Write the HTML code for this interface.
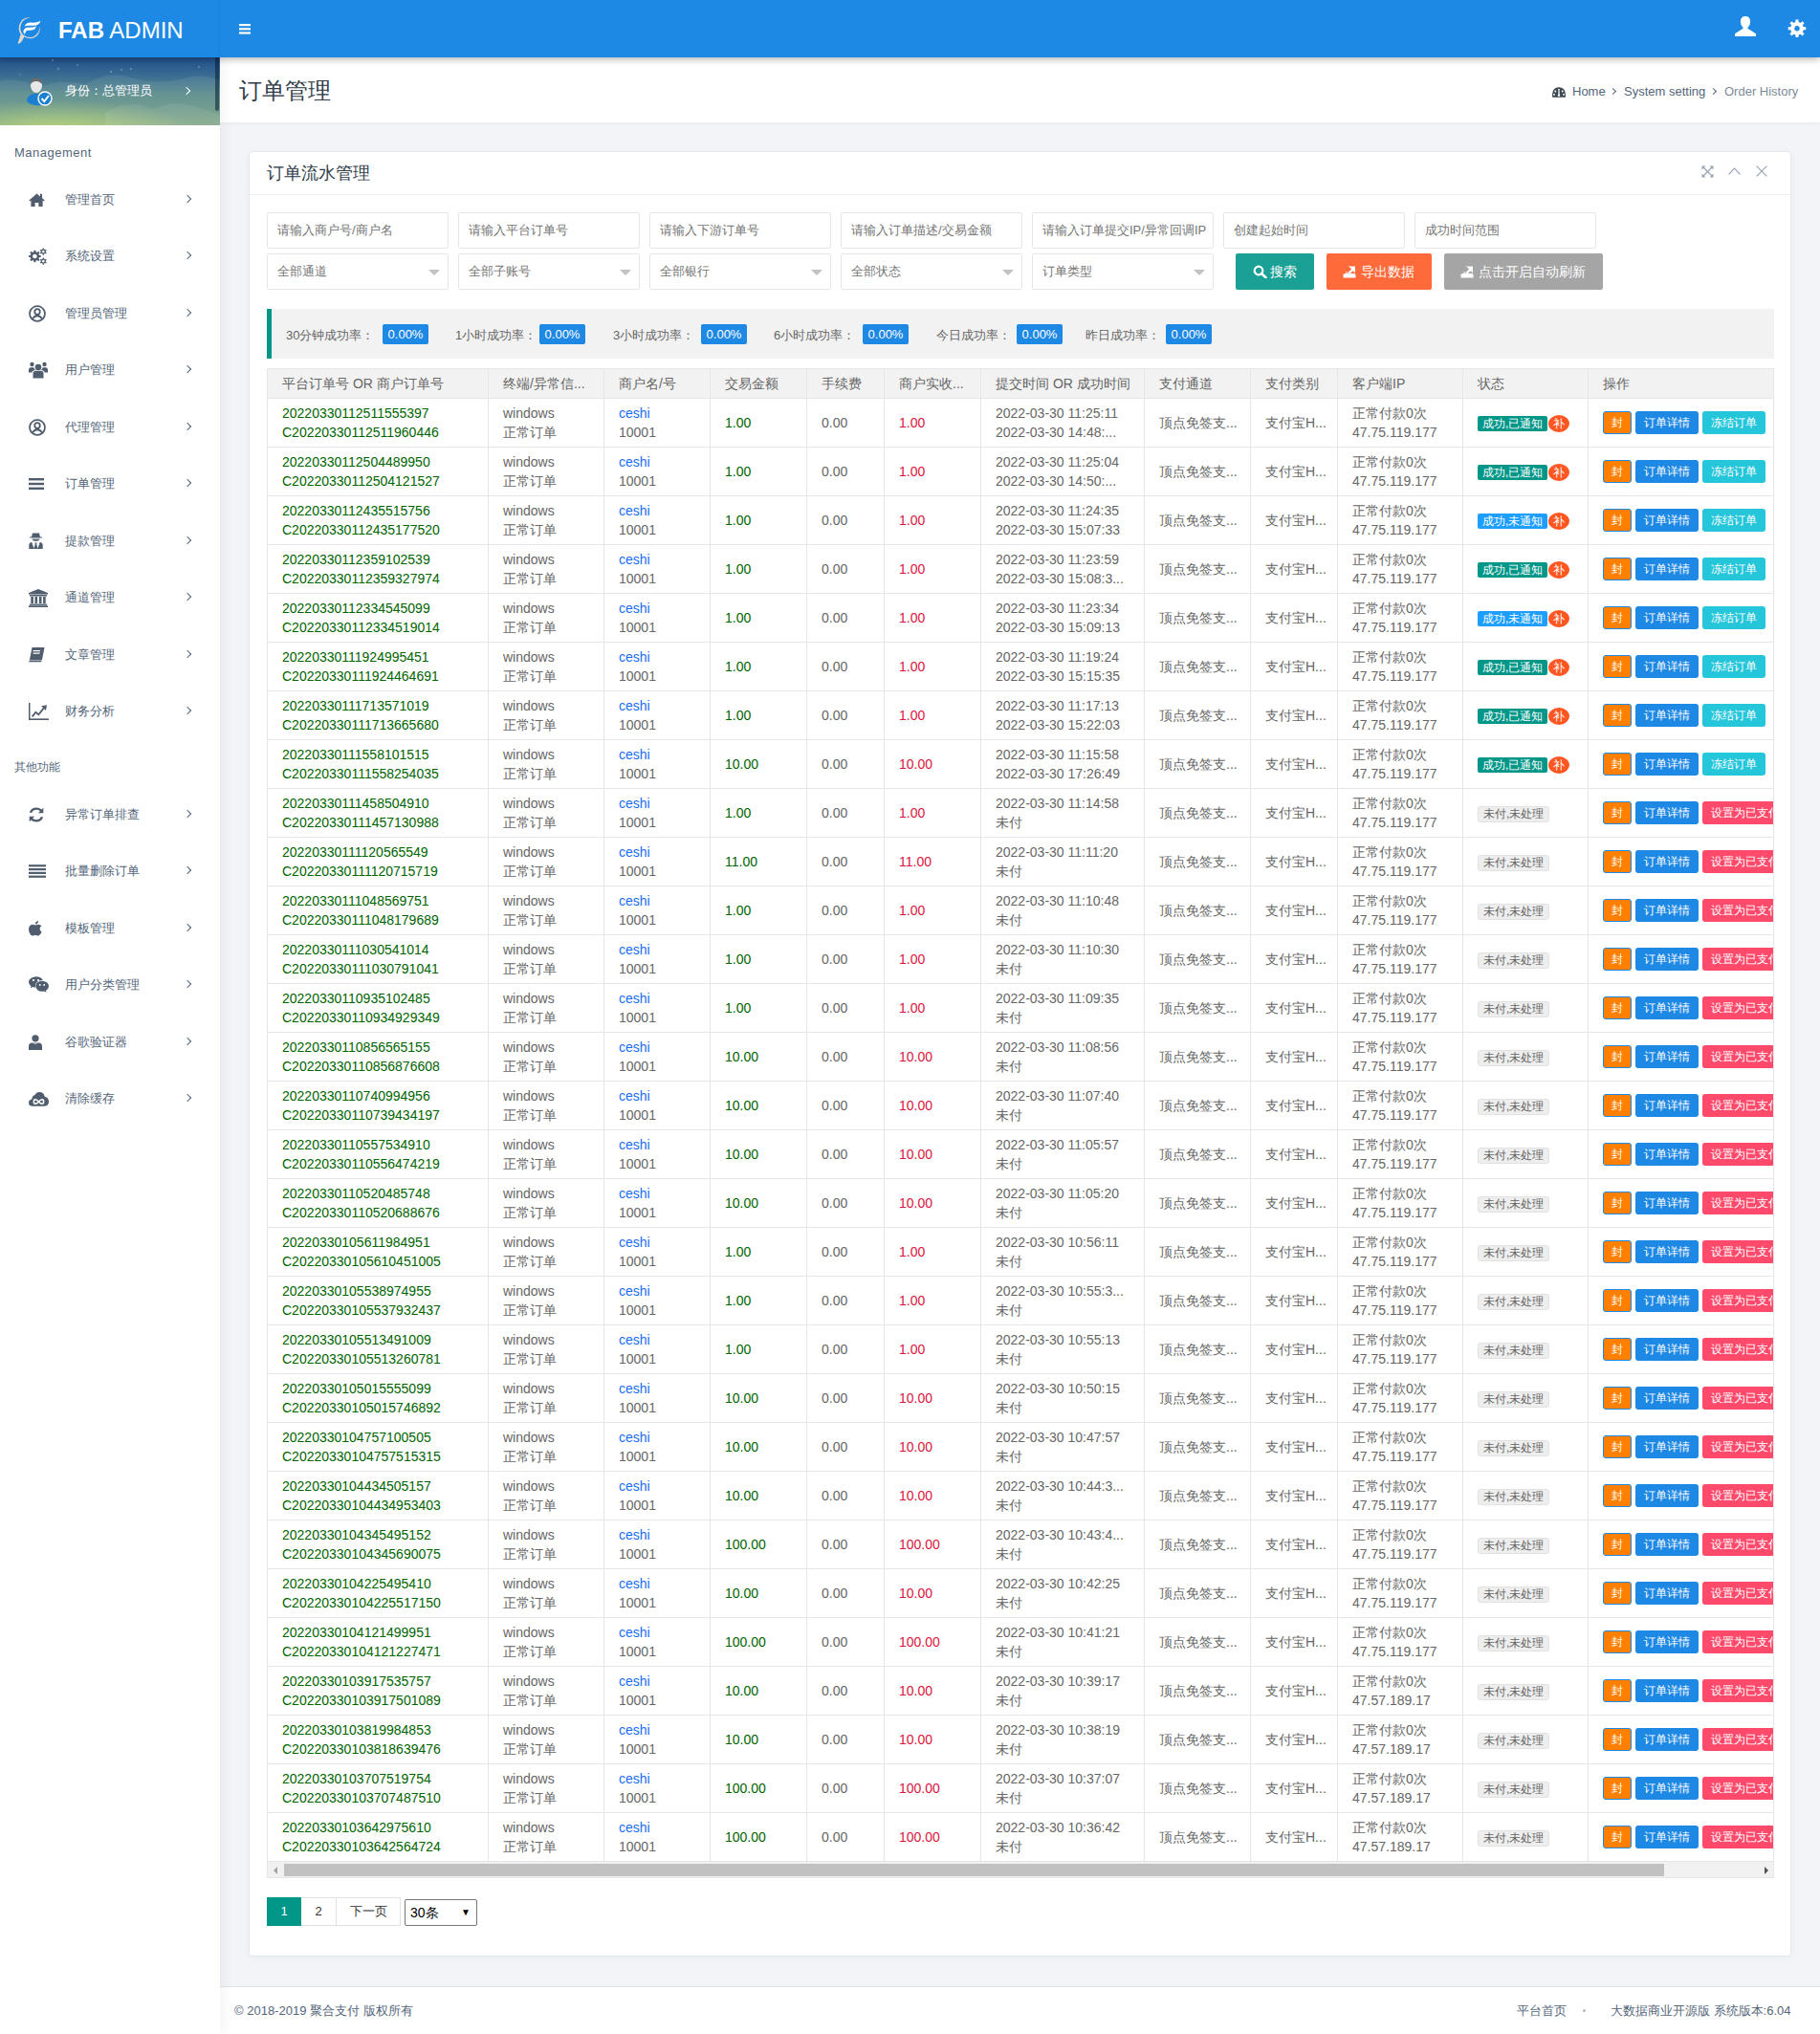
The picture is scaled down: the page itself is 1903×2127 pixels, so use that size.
<!DOCTYPE html>
<html><head><meta charset="utf-8"><title>订单管理</title>
<style>
*{margin:0;padding:0;box-sizing:border-box}
html,body{width:1903px;height:2127px;overflow:hidden}
body{font-family:"Liberation Sans",sans-serif;background:#f2f4f8;position:relative;color:#666;font-size:14px}
.abs{position:absolute}
#hdr{position:absolute;left:0;top:0;width:1903px;height:60px;background:#1e88e5;box-shadow:0 2px 7px rgba(0,0,0,.3);z-index:10}
#hdr .brand{position:absolute;left:61px;top:18px;font-size:24px;line-height:28px;color:#fff;white-space:nowrap}
#hdr .brand b{font-weight:bold}
#side{position:absolute;left:0;top:60px;width:230px;height:2067px;background:#fff;z-index:4;box-shadow:3px 0 14px rgba(0,0,0,.05)}
#upanel{position:absolute;left:0;top:60px;width:230px;height:71px;overflow:hidden;
 background:radial-gradient(ellipse 140px 30px at 60px 75px,rgba(190,220,110,.75),rgba(190,220,110,0)),linear-gradient(180deg,#214f8c 0%,#3b6e92 28%,#5a8b8a 55%,#6a9786 80%,#7ea482 100%);z-index:5}
.si{position:absolute;left:0;width:230px;height:14px}
.sic{position:absolute;left:30px;top:-3px;width:24px;height:20px;display:flex;align-items:center}
.stx{position:absolute;left:68px;top:-2px;font-size:13px;line-height:18px;color:#54667a;white-space:nowrap}
.chev{position:absolute;left:193px;top:3px;width:6px;height:6px;border-right:1.3px solid #54667a;border-top:1.3px solid #54667a;transform:rotate(45deg)}
.slab{position:absolute;left:15px;font-size:13px;letter-spacing:.5px;color:#54667a;line-height:16px;white-space:nowrap}
#tbar{position:absolute;left:230px;top:60px;width:1673px;height:68px;background:#fff;box-shadow:0 2px 5px rgba(0,0,0,.04);z-index:3}
#tbar h1{position:absolute;left:20px;top:21px;font-size:24px;font-weight:normal;color:#2f3d4a;line-height:28px;white-space:nowrap}
.bc{position:absolute;top:28px;font-size:13px;line-height:16px;color:#54667a;white-space:nowrap}
#card{position:absolute;left:260px;top:158px;width:1613px;height:1888px;background:#fff;border:1px solid #e3e8ec;border-radius:4px;box-shadow:0 1px 8px rgba(0,0,0,.04)}
#card .ch{position:absolute;left:0;top:0;width:100%;height:45px;border-bottom:1px solid #f1f1f1}
#card .ct{position:absolute;left:18px;top:11px;font-size:18px;line-height:22px;color:#2f3d4a;white-space:nowrap}
.inp{position:absolute;width:190px;height:38px;border:1px solid #e6e6e6;border-radius:2px;background:#fff;padding-left:10px;font-size:13px;line-height:36px;color:#757575;white-space:nowrap;overflow:hidden}
.tri{position:absolute;right:8px;top:16px;width:0;height:0;border-left:6px solid transparent;border-right:6px solid transparent;border-top:6px solid #c2c2c2}
.btn{position:absolute;top:265px;height:38px;border-radius:2px;color:#fff;font-size:14px;line-height:38px;white-space:nowrap}
.btn svg{position:absolute}
.btn span{position:absolute}
#quote{position:absolute;left:279px;top:323px;width:1576px;height:52px;background:#f2f2f2;border-left:5px solid #009688}
.sl{position:absolute;top:340px;font-size:13px;line-height:22px;color:#666;white-space:nowrap}
.sb{position:absolute;top:339px;height:21px;width:48px;background:#1e88e5;color:#fff;border-radius:2px;font-size:13px;line-height:21px;text-align:center}
#tview{position:absolute;left:279px;top:385px;width:1576px;height:1579px;border:1px solid #e6e6e6;overflow:hidden;background:#fff}
table{border-collapse:collapse;table-layout:fixed;width:1680px;position:absolute;left:-1px;top:-1px}
th,td{border:1px solid #e6e6e6;padding:0;text-align:left;font-weight:normal;vertical-align:middle}
th{background:#f2f2f2;height:31px;color:#666}
td{height:51px}
.c{padding:0 15px;line-height:20px;white-space:nowrap;overflow:hidden;font-size:14px}
.c1{padding:0 15px;line-height:20px;white-space:nowrap;overflow:hidden;font-size:14px}
.g{color:#006400}
.rd{color:#dc143c}
.lk{color:#1a6ef5}
.bd{display:inline-block;height:16px;line-height:16px;font-size:12px;color:#fff;padding:0 5px;border-radius:2px;vertical-align:middle}
.bg{background:#009688}.bb{background:#1e9fff}
.bn{background:#eee;color:#666;border:1px solid #e2e2e2;height:17px;line-height:15px;border-radius:3px}
.bu{display:inline-block;width:22px;height:18px;border-radius:50%;background:#ff5722;color:#fff;font-size:12px;line-height:18px;text-align:center;margin-left:1px;vertical-align:middle}
.ab{display:inline-block;height:24px;line-height:24px;font-size:12px;color:#fff;padding:0 9px;border-radius:3px;margin-right:4px;vertical-align:middle}
.af{background:#ff8000;border:1px solid #1e88e5;line-height:22px;padding:0 8px}
.ad{background:#1e88e5}.ac{background:#26c6da}.ar{background:#ff4a6c}
#sbar{position:absolute;left:0;top:1561px;width:1574px;height:16px;background:#f1f1f1}
#pg{position:absolute;left:279px;top:1984px;height:30px}
.pgi{position:absolute;top:0;height:30px;line-height:28px;border:1px solid #e2e2e2;background:#fff;color:#333;font-size:13px;text-align:center}
#foot{position:absolute;left:230px;top:2077px;width:1673px;height:50px;background:#fff;border-top:1px solid #dde1e6;font-size:13px;color:#54667a}
</style></head><body>
<div id="hdr">
 <svg class="abs" style="left:18px;top:17px" width="26" height="30" viewBox="0 0 26 30">
  <path d="M12.5 1.2 Q5 1 2.3 8.5 Q0.5 14 3.6 19 Q1.8 25 0.5 28.6 Q3 29 5 26 Q6.3 23 7.4 21.5 Q10.8 23.5 14.5 23.3 Q21 22.5 23.3 16 Q24.2 13 23.6 10.5 Q23.5 16.5 18.5 20.5 Q13.5 23.5 8 20.5 Q6.3 19.5 5 18 Q2.5 13.5 3.8 9 Q6 2.6 13.7 1.6 Z" fill="#dcd6d0"/>
  <path d="M8.3 9 Q10.5 6.2 15 6.6 Q19.5 7 24.5 5 Q23 8.8 19.5 9.6 Q15 10 11.5 9.7 Q9.5 9.6 8.3 10.8 Z" fill="#fff"/>
  <path d="M6.3 16.5 Q6.8 12.2 10.5 11.8 Q13.5 11.6 16 11.6 Q18.8 11.4 19.8 10 Q19.3 14 15.6 14.6 Q12.5 14.9 10.4 14.9 Q8.6 15.1 8 19 Z" fill="#fff"/>
 </svg>
 <div class="abs" style="left:229px;top:0;width:1px;height:60px;background:rgba(0,0,0,.04)"></div>
 <div class="brand"><b>FAB</b> ADMIN</div>
 <svg class="abs" style="left:250px;top:25px" width="12" height="11" viewBox="0 0 12 11"><g fill="#fff"><rect y="0" width="12" height="2.2"/><rect y="4.2" width="12" height="2.2"/><rect y="8.4" width="12" height="2.2"/></g></svg>
 <svg class="abs" style="left:1814px;top:17px" width="22" height="21" viewBox="0 0 22 21"><path fill="#fff" d="M11 0 Q16 0 16.2 5.8 Q16 9.8 13.4 12 V12.8 L22 18.3 V21 H0 V18.3 L8.6 12.8 V12 Q6 9.8 5.8 5.8 Q6 0 11 0 Z"/></svg>
 <svg class="abs" style="left:1869px;top:20px" width="20" height="20" viewBox="0 0 20 20"><path fill="#fff" fill-rule="evenodd" d="M8.46 3.07 L8.47 0.53 L11.53 0.53 L11.54 3.07 L13.67 3.96 L15.48 2.16 L17.64 4.32 L15.84 6.13 L16.73 8.26 L19.27 8.27 L19.27 11.33 L16.73 11.34 L15.84 13.47 L17.64 15.28 L15.48 17.44 L13.67 15.64 L11.54 16.53 L11.53 19.07 L8.47 19.07 L8.46 16.53 L6.33 15.64 L4.52 17.44 L2.36 15.28 L4.16 13.47 L3.27 11.34 L0.73 11.33 L0.73 8.27 L3.27 8.26 L4.16 6.13 L2.36 4.32 L4.52 2.16 L6.33 3.96 Z M10.00 7.00 A2.80 2.80 0 1 0 10.01 7.00 Z"/></svg>
</div>
<div id="side">
</div>
<div id="upanel">
 <svg class="abs" style="left:0;top:0" width="230" height="71" viewBox="0 0 230 71">
  <path d="M0 25 Q20 20 40 32 Q60 22 90 28 Q115 12 140 22 Q170 30 200 20 Q215 18 230 24 V71 H0 Z" fill="#ffffff" opacity=".08"/>
  <path d="M110 58 Q135 42 160 54 Q180 44 205 52 L230 60 V71 H110 Z" fill="#ffffff" opacity=".08"/>
  <g fill="#fff" opacity=".55"><circle cx="55" cy="3" r=".8"/><circle cx="61" cy="12" r=".8"/><circle cx="81" cy="8" r=".7"/><circle cx="116" cy="15" r=".8"/><circle cx="127" cy="13" r=".7"/><circle cx="137" cy="12" r=".8"/><circle cx="208" cy="10" r=".8"/><circle cx="21" cy="18" r=".6"/></g>
 </svg>
 <svg class="abs" style="left:26px;top:21px" width="29" height="30" viewBox="0 0 29 30">
  <path d="M2 25 Q2 18 10 17 H14 Q20 18 21 23 L18 29 Q6 30 2 25 Z" fill="#1a7fd0"/>
  <ellipse cx="12" cy="8.5" rx="6" ry="7.5" fill="#e8e8e8"/>
  <path d="M6 7 Q6 0.5 12 0.5 Q18 0.5 18 7 Q15 3.5 12 4 Q8.5 3.5 6 7 Z" fill="#6a6a6a"/>
  <circle cx="21" cy="22" r="7" fill="#1a7fd0" stroke="#fff" stroke-width="1.4"/>
  <path d="M17.5 22 L20.3 25 L25 19" fill="none" stroke="#fff" stroke-width="2"/>
 </svg>
 <div class="abs" style="left:68px;top:26px;font-size:13px;line-height:18px;color:#fff;white-space:nowrap">身份：总管理员</div>
 <span class="chev" style="left:192px;top:32px;border-color:#fff"></span>
 <div class="abs" style="left:225px;top:0;width:4px;height:56px;border-radius:2px;background:rgba(10,30,45,.55)"></div>
</div>
<div id="sidelist" style="position:absolute;left:0;top:0;z-index:6">
 <div class="slab" style="top:152px">Management</div>
 <div class="si" style="top:202.0px"><span class="sic"><svg width="17" height="14" viewBox="0 0 17 14"><path fill="#4f5d6e" d="M8.5 0.6 L0.3 7.4 L1.3 8.5 L2.4 7.6 V14 H6.6 V10 H10.4 V14 H14.6 V7.6 L15.7 8.5 L16.7 7.4 L14 5.1 V0.8 H12 V3.4 Z"/></svg></span><span class="stx">管理首页</span><span class="chev"></span></div>
 <div class="si" style="top:261.4px"><span class="sic"><svg width="20" height="18" viewBox="0 0 20 18"><g fill="#4f5d6e" fill-rule="evenodd"><path d="M5.37 4.31 L5.40 2.68 L7.40 2.68 L7.43 4.31 L8.99 4.96 L10.16 3.82 L11.58 5.24 L10.44 6.41 L11.09 7.97 L12.72 8.00 L12.72 10.00 L11.09 10.03 L10.44 11.59 L11.58 12.76 L10.16 14.18 L8.99 13.04 L7.43 13.69 L7.40 15.32 L5.40 15.32 L5.37 13.69 L3.81 13.04 L2.64 14.18 L1.22 12.76 L2.36 11.59 L1.71 10.03 L0.08 10.00 L0.08 8.00 L1.71 7.97 L2.36 6.41 L1.22 5.24 L2.64 3.82 L3.81 4.96 Z M6.40 6.70 A2.30 2.30 0 1 0 6.41 6.70 Z"/><path d="M14.63 1.59 L14.61 0.47 L15.99 0.47 L15.97 1.59 L17.14 2.27 L18.10 1.68 L18.79 2.88 L17.81 3.42 L17.81 4.78 L18.79 5.32 L18.10 6.52 L17.14 5.93 L15.97 6.61 L15.99 7.73 L14.61 7.73 L14.63 6.61 L13.46 5.93 L12.50 6.52 L11.81 5.32 L12.79 4.78 L12.79 3.42 L11.81 2.88 L12.50 1.68 L13.46 2.27 Z M15.30 2.80 A1.30 1.30 0 1 0 15.31 2.80 Z"/><path d="M14.63 11.59 L14.61 10.47 L15.99 10.47 L15.97 11.59 L17.14 12.27 L18.10 11.68 L18.79 12.88 L17.81 13.42 L17.81 14.78 L18.79 15.32 L18.10 16.52 L17.14 15.93 L15.97 16.61 L15.99 17.73 L14.61 17.73 L14.63 16.61 L13.46 15.93 L12.50 16.52 L11.81 15.32 L12.79 14.78 L12.79 13.42 L11.81 12.88 L12.50 11.68 L13.46 12.27 Z M15.30 12.80 A1.30 1.30 0 1 0 15.31 12.80 Z"/></g></svg></span><span class="stx">系统设置</span><span class="chev"></span></div>
 <div class="si" style="top:320.9px"><span class="sic"><svg width="18" height="18" viewBox="0 0 18 18"><path fill="#4f5d6e" fill-rule="evenodd" d="M9 0.2 A8.8 8.8 0 1 0 9.01 0.2 Z M9 2.1 A6.9 6.9 0 0 1 14.4 13.4 Q13 10.9 10.9 10.5 Q12.7 9.3 12.7 7.1 Q12.6 3.4 9 3.3 Q5.4 3.4 5.3 7.1 Q5.3 9.3 7.1 10.5 Q5 10.9 3.6 13.4 A6.9 6.9 0 0 1 9 2.1 Z M9 5.1 Q10.8 5.2 10.9 7.1 Q10.8 9 9 9.1 Q7.2 9 7.1 7.1 Q7.2 5.2 9 5.1 Z M4.9 14.8 Q6.3 12.2 9 12.2 Q11.7 12.2 13.1 14.8 Q11.3 15.9 9 15.9 Q6.7 15.9 4.9 14.8 Z"/></svg></span><span class="stx">管理员管理</span><span class="chev"></span></div>
 <div class="si" style="top:380.3px"><span class="sic"><svg width="20" height="18" viewBox="0 0 20 18"><g fill="#4f5d6e"><circle cx="10" cy="6" r="3.3"/><path d="M4.5 17.5 V13 Q4.5 9.8 7.5 9.8 H12.5 Q15.5 9.8 15.5 13 V17.5 Z"/><circle cx="3.5" cy="3" r="2.2"/><circle cx="16.5" cy="3" r="2.2"/><path d="M0 11.5 V8.5 Q0 6.2 2.5 6.2 H5.2 Q6 8 7 9 Q3.5 9.5 3.5 11.5 Z"/><path d="M20 11.5 V8.5 Q20 6.2 17.5 6.2 H14.8 Q14 8 13 9 Q16.5 9.5 16.5 11.5 Z"/></g></svg></span><span class="stx">用户管理</span><span class="chev"></span></div>
 <div class="si" style="top:439.8px"><span class="sic"><svg width="18" height="18" viewBox="0 0 18 18"><path fill="#4f5d6e" fill-rule="evenodd" d="M9 0.2 A8.8 8.8 0 1 0 9.01 0.2 Z M9 2.1 A6.9 6.9 0 0 1 14.4 13.4 Q13 10.9 10.9 10.5 Q12.7 9.3 12.7 7.1 Q12.6 3.4 9 3.3 Q5.4 3.4 5.3 7.1 Q5.3 9.3 7.1 10.5 Q5 10.9 3.6 13.4 A6.9 6.9 0 0 1 9 2.1 Z M9 5.1 Q10.8 5.2 10.9 7.1 Q10.8 9 9 9.1 Q7.2 9 7.1 7.1 Q7.2 5.2 9 5.1 Z M4.9 14.8 Q6.3 12.2 9 12.2 Q11.7 12.2 13.1 14.8 Q11.3 15.9 9 15.9 Q6.7 15.9 4.9 14.8 Z"/></svg></span><span class="stx">代理管理</span><span class="chev"></span></div>
 <div class="si" style="top:499.2px"><span class="sic"><svg width="16" height="14" viewBox="0 0 16 14"><g fill="#4f5d6e"><rect x="0" y="1" width="16" height="2.4"/><rect x="0" y="5.8" width="16" height="2.4"/><rect x="0" y="10.6" width="16" height="2.4"/></g></svg></span><span class="stx">订单管理</span><span class="chev"></span></div>
 <div class="si" style="top:558.6px"><span class="sic"><svg width="15" height="17" viewBox="0 0 15 17"><g fill="#4f5d6e"><path d="M4 0.5 H11 L12 4.5 H14 V5.6 H1 V4.5 H3 Z"/><path d="M3.5 6.5 H11.5 Q11 9 7.5 9 Q4 9 3.5 6.5 Z" opacity=".9"/><path d="M0.3 17 V13.5 Q0.3 10.2 3.2 10 L5.5 16.5 L6.8 12 L6.3 10.5 H8.7 L8.2 12 L9.5 16.5 L11.8 10 Q14.7 10.2 14.7 13.5 V17 Z"/></g></svg></span><span class="stx">提款管理</span><span class="chev"></span></div>
 <div class="si" style="top:618.1px"><span class="sic"><svg width="20" height="19" viewBox="0 0 20 19"><g fill="#4f5d6e"><path d="M10 0 L20 4 V5.5 H0 V4 Z"/><rect x="1" y="6" width="18" height="1.5"/><rect x="2.3" y="8" width="2.6" height="7"/><rect x="6.5" y="8" width="2.6" height="7"/><rect x="10.9" y="8" width="2.6" height="7"/><rect x="15.1" y="8" width="2.6" height="7"/><rect x="1" y="15.5" width="18" height="1.4"/><rect x="0" y="17.3" width="20" height="1.7"/></g></svg></span><span class="stx">通道管理</span><span class="chev"></span></div>
 <div class="si" style="top:677.5px"><span class="sic"><svg width="17" height="16" viewBox="0 0 17 16"><g fill="#4f5d6e"><path d="M3.5 0 H16.5 L14 13 H1 Z"/><path d="M0.6 13.5 H13.6 L13.3 15.2 H0.3 Z" /></g><g fill="#fff"><rect x="5.2" y="3" width="7.5" height="1.2" transform="skewX(-11)"/><rect x="5.8" y="5.5" width="7" height="1.2" transform="skewX(-11)"/></g></svg></span><span class="stx">文章管理</span><span class="chev"></span></div>
 <div class="si" style="top:737.0px"><span class="sic"><svg width="21" height="18" viewBox="0 0 21 18"><g fill="#4f5d6e"><rect x="0" y="0" width="1.5" height="18"/><rect x="0" y="16.4" width="21" height="1.6"/><path d="M3 13.8 L7.2 8.5 L10.2 11 L15 5 L13.2 3.3 L19 2.2 L18 8 L16.3 6.3 L10.5 13.4 L7.5 11 L4.5 15 Z"/></g></svg></span><span class="stx">财务分析</span><span class="chev"></span></div>
 <div class="slab" style="top:794px;font-size:12px;letter-spacing:0">其他功能</div>
 <div class="si" style="top:844.5px"><span class="sic"><svg width="16" height="16" viewBox="0 0 16 16"><g fill="#4f5d6e"><path d="M15.3 0.8 V6.3 H9.8 L11.9 4.2 Q10.3 2.8 8.2 2.8 Q4.6 2.8 3.2 6 L0.8 5.5 Q2.6 0.5 8.2 0.5 Q11.3 0.5 13.5 2.6 Z"/><path d="M0.7 15.2 V9.7 H6.2 L4.1 11.8 Q5.7 13.2 7.8 13.2 Q11.4 13.2 12.8 10 L15.2 10.5 Q13.4 15.5 7.8 15.5 Q4.7 15.5 2.5 13.4 Z"/></g></svg></span><span class="stx">异常订单排查</span><span class="chev"></span></div>
 <div class="si" style="top:904.0px"><span class="sic"><svg width="18" height="14" viewBox="0 0 18 14"><g fill="#4f5d6e"><rect x="0" y="0.2" width="18" height="2.2"/><rect x="0" y="4" width="18" height="2.2"/><rect x="0" y="7.8" width="18" height="2.2"/><rect x="0" y="11.6" width="18" height="2.2"/></g></svg></span><span class="stx">批量删除订单</span><span class="chev"></span></div>
 <div class="si" style="top:963.6px"><span class="sic"><svg width="14" height="16" viewBox="0 0 14 16"><g fill="#4f5d6e"><path d="M11.6 8.5 Q11.6 6.3 13.4 5.3 Q12.3 3.8 10.4 3.7 Q9.3 3.6 7.9 4.2 Q7.2 4.5 6.8 4.5 Q6.3 4.5 5.5 4.1 Q4.6 3.7 3.9 3.7 Q2.2 3.8 1.1 5.2 Q0 6.6 0 8.7 Q0 11 1.2 13.2 Q2.4 15.6 3.8 15.6 Q4.5 15.6 5.3 15.2 Q6.1 14.8 6.9 14.8 Q7.7 14.8 8.5 15.2 Q9.2 15.6 9.9 15.6 Q11.3 15.5 12.4 13.6 Q13.2 12.4 13.6 11.3 Q11.6 10.6 11.6 8.5 Z"/><path d="M7 3.4 Q6.9 2 7.8 1 Q8.8 0 10 0 Q10.1 1.4 9.2 2.4 Q8.2 3.5 7 3.4 Z"/></g></svg></span><span class="stx">模板管理</span><span class="chev"></span></div>
 <div class="si" style="top:1023.1px"><span class="sic"><svg width="21" height="18" viewBox="0 0 21 18"><g><path fill="#4f5d6e" d="M7.8 0.3 Q3.6 0.3 1.3 2.8 Q0 4.2 0 6.1 Q0 8.7 2.5 10.4 L1.8 12.4 L4.3 11.1 Q5.7 11.6 7.2 11.6 Q6.9 10.8 6.9 10 Q6.9 7.4 9 5.7 Q11 4.1 14.1 4.1 H14.8 Q14.1 2.4 12.2 1.3 Q10.3 0.3 7.8 0.3 Z"/><circle cx="5" cy="4" r="1.1" fill="#fff"/><circle cx="10" cy="4" r="1.1" fill="#fff"/><path fill="#4f5d6e" d="M21 10.3 Q21 7.9 18.9 6.3 Q16.8 4.8 14 4.8 Q11.2 4.8 9.2 6.3 Q7.3 7.9 7.3 10.3 Q7.3 12.6 9.2 14.2 Q11.2 15.8 14 15.8 Q15.3 15.8 16.4 15.4 L18.6 16.9 L18 14.8 Q21 13 21 10.3 Z"/><circle cx="11.8" cy="9" r="0.9" fill="#fff"/><circle cx="16.2" cy="9" r="0.9" fill="#fff"/></g></svg></span><span class="stx">用户分类管理</span><span class="chev"></span></div>
 <div class="si" style="top:1082.7px"><span class="sic"><svg width="14" height="16" viewBox="0 0 14 16"><g fill="#4f5d6e"><circle cx="7" cy="3.8" r="3.6"/><path d="M0 16 V12.3 Q0 8.6 3.6 8.6 H10.4 Q14 8.6 14 12.3 V16 Z"/></g><path d="M4.8 8.6 Q7 10.4 9.2 8.6" fill="none" stroke="#fff" stroke-width=".7"/></svg></span><span class="stx">谷歌验证器</span><span class="chev"></span></div>
 <div class="si" style="top:1142.2px"><span class="sic"><svg width="21" height="15" viewBox="0 0 21 15"><path fill="#4f5d6e" d="M4.2 14.8 Q0 14.8 0 11.2 Q0 8.2 3.3 7.5 Q3.5 3.8 6.6 2.9 Q7.8 0 11.3 0 Q15.8 0 16.8 4.8 Q21 5.8 21 10 Q21 14.8 16 14.8 Z"/><path d="M10.5 10 Q8.5 7.7 7 7.7 Q5.3 7.7 5.3 10 Q5.3 12.3 7 12.3 Q8.5 12.3 10.5 10 Q12.5 7.7 14 7.7 Q15.7 7.7 15.7 10 Q15.7 12.3 14 12.3 Q12.5 12.3 10.5 10 Z" fill="none" stroke="#fff" stroke-width="1.5"/></svg></span><span class="stx">清除缓存</span><span class="chev"></span></div>
</div>
<div id="tbar">
 <h1>订单管理</h1>
 <svg class="abs" style="left:1393px;top:31px" width="14" height="11" viewBox="0 0 14 11"><path fill="#3d4852" fill-rule="evenodd" d="M7 0.3 Q13.7 0.5 13.9 7.5 V10.7 H0.1 V7.5 Q0.3 0.5 7 0.3 Z M7 2 a0.9 0.9 0 1 0 0.01 0Z M3.3 3.6 a0.9 .9 0 1 0 .01 0Z M10.7 3.6 a.9 .9 0 1 0 .01 0Z M2 7 a.9 .9 0 1 0 .01 0Z M12 7 a.9 .9 0 1 0 .01 0Z M7.6 4 L6.4 4 L6.3 7.8 a1.2 1.2 0 1 0 1.4 0 Z"/></svg>
 <span class="bc" style="left:1414px">Home</span>
 <span class="chev" style="left:1454px;top:33px;width:5px;height:5px;border-width:1px;border-color:#54667a"></span>
 <span class="bc" style="left:1468px">System setting</span>
 <span class="chev" style="left:1559px;top:33px;width:5px;height:5px;border-width:1px;border-color:#54667a"></span>
 <span class="bc" style="left:1573px;color:#7d8a98">Order History</span>
</div>
<div id="card">
 <div class="ch"><div class="ct">订单流水管理</div>
  <svg class="abs" style="left:1518px;top:14px" width="13" height="13" viewBox="0 0 13 13"><g fill="none" stroke="#99a3b3" stroke-width="1.2"><path d="M1.5 1.5 L11.5 11.5 M11.5 1.5 L1.5 11.5"/></g><g fill="#99a3b3"><path d="M0.5 0.5 H4.5 L0.5 4.5 Z M12.5 0.5 V4.5 L8.5 0.5 Z M0.5 12.5 V8.5 L4.5 12.5 Z M12.5 12.5 H8.5 L12.5 8.5 Z"/></g></svg>
  <svg class="abs" style="left:1546px;top:16px" width="13" height="8" viewBox="0 0 13 8"><path d="M0.6 7.3 L6.5 1.2 L12.4 7.3" fill="none" stroke="#99a3b3" stroke-width="1.2"/></svg>
  <svg class="abs" style="left:1575px;top:14px" width="12" height="12" viewBox="0 0 12 12"><path d="M0.6 0.6 L11.4 11.4 M11.4 0.6 L0.6 11.4" fill="none" stroke="#99a3b3" stroke-width="1.2"/></svg>
 </div>
</div>
<div id="inputs" style="position:absolute;left:0;top:0">
<div class="inp" style="left:279px;top:222px">请输入商户号/商户名</div><div class="inp" style="left:479px;top:222px">请输入平台订单号</div><div class="inp" style="left:679px;top:222px">请输入下游订单号</div><div class="inp" style="left:879px;top:222px">请输入订单描述/交易金额</div><div class="inp" style="left:1079px;top:222px">请输入订单提交IP/异常回调IP</div><div class="inp" style="left:1279px;top:222px">创建起始时间</div><div class="inp" style="left:1479px;top:222px">成功时间范围</div><div class="inp sel" style="left:279px;top:265px">全部通道<i class="tri"></i></div><div class="inp sel" style="left:479px;top:265px">全部子账号<i class="tri"></i></div><div class="inp sel" style="left:679px;top:265px">全部银行<i class="tri"></i></div><div class="inp sel" style="left:879px;top:265px">全部状态<i class="tri"></i></div><div class="inp sel" style="left:1079px;top:265px">订单类型<i class="tri"></i></div>
 <div class="btn" style="left:1292px;width:82px;background:#1aa094">
  <svg style="left:18px;top:12px" width="15" height="14" viewBox="0 0 15 14"><circle cx="6" cy="6" r="4.3" fill="none" stroke="#fff" stroke-width="2.2"/><path d="M9 9 L13.5 13.2" stroke="#fff" stroke-width="2.6" stroke-linecap="round"/></svg>
  <span style="left:36px;top:0">搜索</span></div>
 <div class="btn" style="left:1387px;width:110px;background:#ff6a3a">
  <svg style="left:17px;top:12px" width="14" height="14" viewBox="0 0 14 14"><g fill="#fff"><path d="M0.5 13.5 V10.5 Q0.5 9 2 9 H12 Q13.5 9 13.5 10.5 V13.5 Z"/><path d="M5 1.5 H13 V8.5 L10.8 6.3 L7.2 9.5 L5.5 7.8 L9.2 4.4 L7 2.2 Z"/><path d="M2.5 6.5 L4 8 L3 8.8 H6 L4.6 7.5 Z"/></g></svg>
  <span style="left:36px;top:0">导出数据</span></div>
 <div class="btn" style="left:1510px;width:166px;background:#a5a5a5">
  <svg style="left:17px;top:12px" width="14" height="14" viewBox="0 0 14 14"><g fill="#fff"><path d="M0.5 13.5 V10.5 Q0.5 9 2 9 H12 Q13.5 9 13.5 10.5 V13.5 Z"/><path d="M5 1.5 H13 V8.5 L10.8 6.3 L7.2 9.5 L5.5 7.8 L9.2 4.4 L7 2.2 Z"/><path d="M2.5 6.5 L4 8 L3 8.8 H6 L4.6 7.5 Z"/></g></svg>
  <span style="left:36px;top:0">点击开启自动刷新</span></div>
</div>
<div id="quote"></div>
<span class="sl" style="left:299px">30分钟成功率：</span><span class="sb" style="left:400px">0.00%</span><span class="sl" style="left:476px">1小时成功率：</span><span class="sb" style="left:564px">0.00%</span><span class="sl" style="left:641px">3小时成功率：</span><span class="sb" style="left:733px">0.00%</span><span class="sl" style="left:809px">6小时成功率：</span><span class="sb" style="left:902px">0.00%</span><span class="sl" style="left:979px">今日成功率：</span><span class="sb" style="left:1063px">0.00%</span><span class="sl" style="left:1135px">昨日成功率：</span><span class="sb" style="left:1219px">0.00%</span>
<div id="tview">
<table><colgroup><col style="width:231px"><col style="width:121px"><col style="width:111px"><col style="width:101px"><col style="width:81px"><col style="width:101px"><col style="width:171px"><col style="width:111px"><col style="width:91px"><col style="width:131px"><col style="width:131px"><col style="width:300px"></colgroup>
<thead><tr><th><div class="c">平台订单号 OR 商户订单号</div></th><th><div class="c">终端/异常信...</div></th><th><div class="c">商户名/号</div></th><th><div class="c">交易金额</div></th><th><div class="c">手续费</div></th><th><div class="c">商户实收...</div></th><th><div class="c">提交时间 OR 成功时间</div></th><th><div class="c">支付通道</div></th><th><div class="c">支付类别</div></th><th><div class="c">客户端IP</div></th><th><div class="c">状态</div></th><th><div class="c">操作</div></th></tr></thead>
<tbody>
<tr><td><div class="c g">20220330112511555397<br>C20220330112511960446</div></td><td><div class="c">windows<br>正常订单</div></td><td><div class="c"><span class="lk">ceshi</span><br>10001</div></td><td><div class="c1 g">1.00</div></td><td><div class="c1">0.00</div></td><td><div class="c1 rd">1.00</div></td><td><div class="c">2022-03-30 11:25:11<br>2022-03-30 14:48:...</div></td><td><div class="c1">顶点免签支...</div></td><td><div class="c1">支付宝H...</div></td><td><div class="c">正常付款0次<br>47.75.119.177</div></td><td><div class="c1"><span class="bd bg">成功,已通知</span><span class="bu">补</span></div></td><td><div class="c1"><span class="ab af">封</span><span class="ab ad">订单详情</span><span class="ab ac">冻结订单</span></div></td></tr>
<tr><td><div class="c g">20220330112504489950<br>C20220330112504121527</div></td><td><div class="c">windows<br>正常订单</div></td><td><div class="c"><span class="lk">ceshi</span><br>10001</div></td><td><div class="c1 g">1.00</div></td><td><div class="c1">0.00</div></td><td><div class="c1 rd">1.00</div></td><td><div class="c">2022-03-30 11:25:04<br>2022-03-30 14:50:...</div></td><td><div class="c1">顶点免签支...</div></td><td><div class="c1">支付宝H...</div></td><td><div class="c">正常付款0次<br>47.75.119.177</div></td><td><div class="c1"><span class="bd bg">成功,已通知</span><span class="bu">补</span></div></td><td><div class="c1"><span class="ab af">封</span><span class="ab ad">订单详情</span><span class="ab ac">冻结订单</span></div></td></tr>
<tr><td><div class="c g">20220330112435515756<br>C20220330112435177520</div></td><td><div class="c">windows<br>正常订单</div></td><td><div class="c"><span class="lk">ceshi</span><br>10001</div></td><td><div class="c1 g">1.00</div></td><td><div class="c1">0.00</div></td><td><div class="c1 rd">1.00</div></td><td><div class="c">2022-03-30 11:24:35<br>2022-03-30 15:07:33</div></td><td><div class="c1">顶点免签支...</div></td><td><div class="c1">支付宝H...</div></td><td><div class="c">正常付款0次<br>47.75.119.177</div></td><td><div class="c1"><span class="bd bb">成功,未通知</span><span class="bu">补</span></div></td><td><div class="c1"><span class="ab af">封</span><span class="ab ad">订单详情</span><span class="ab ac">冻结订单</span></div></td></tr>
<tr><td><div class="c g">20220330112359102539<br>C20220330112359327974</div></td><td><div class="c">windows<br>正常订单</div></td><td><div class="c"><span class="lk">ceshi</span><br>10001</div></td><td><div class="c1 g">1.00</div></td><td><div class="c1">0.00</div></td><td><div class="c1 rd">1.00</div></td><td><div class="c">2022-03-30 11:23:59<br>2022-03-30 15:08:3...</div></td><td><div class="c1">顶点免签支...</div></td><td><div class="c1">支付宝H...</div></td><td><div class="c">正常付款0次<br>47.75.119.177</div></td><td><div class="c1"><span class="bd bg">成功,已通知</span><span class="bu">补</span></div></td><td><div class="c1"><span class="ab af">封</span><span class="ab ad">订单详情</span><span class="ab ac">冻结订单</span></div></td></tr>
<tr><td><div class="c g">20220330112334545099<br>C20220330112334519014</div></td><td><div class="c">windows<br>正常订单</div></td><td><div class="c"><span class="lk">ceshi</span><br>10001</div></td><td><div class="c1 g">1.00</div></td><td><div class="c1">0.00</div></td><td><div class="c1 rd">1.00</div></td><td><div class="c">2022-03-30 11:23:34<br>2022-03-30 15:09:13</div></td><td><div class="c1">顶点免签支...</div></td><td><div class="c1">支付宝H...</div></td><td><div class="c">正常付款0次<br>47.75.119.177</div></td><td><div class="c1"><span class="bd bb">成功,未通知</span><span class="bu">补</span></div></td><td><div class="c1"><span class="ab af">封</span><span class="ab ad">订单详情</span><span class="ab ac">冻结订单</span></div></td></tr>
<tr><td><div class="c g">20220330111924995451<br>C20220330111924464691</div></td><td><div class="c">windows<br>正常订单</div></td><td><div class="c"><span class="lk">ceshi</span><br>10001</div></td><td><div class="c1 g">1.00</div></td><td><div class="c1">0.00</div></td><td><div class="c1 rd">1.00</div></td><td><div class="c">2022-03-30 11:19:24<br>2022-03-30 15:15:35</div></td><td><div class="c1">顶点免签支...</div></td><td><div class="c1">支付宝H...</div></td><td><div class="c">正常付款0次<br>47.75.119.177</div></td><td><div class="c1"><span class="bd bg">成功,已通知</span><span class="bu">补</span></div></td><td><div class="c1"><span class="ab af">封</span><span class="ab ad">订单详情</span><span class="ab ac">冻结订单</span></div></td></tr>
<tr><td><div class="c g">20220330111713571019<br>C20220330111713665680</div></td><td><div class="c">windows<br>正常订单</div></td><td><div class="c"><span class="lk">ceshi</span><br>10001</div></td><td><div class="c1 g">1.00</div></td><td><div class="c1">0.00</div></td><td><div class="c1 rd">1.00</div></td><td><div class="c">2022-03-30 11:17:13<br>2022-03-30 15:22:03</div></td><td><div class="c1">顶点免签支...</div></td><td><div class="c1">支付宝H...</div></td><td><div class="c">正常付款0次<br>47.75.119.177</div></td><td><div class="c1"><span class="bd bg">成功,已通知</span><span class="bu">补</span></div></td><td><div class="c1"><span class="ab af">封</span><span class="ab ad">订单详情</span><span class="ab ac">冻结订单</span></div></td></tr>
<tr><td><div class="c g">20220330111558101515<br>C20220330111558254035</div></td><td><div class="c">windows<br>正常订单</div></td><td><div class="c"><span class="lk">ceshi</span><br>10001</div></td><td><div class="c1 g">10.00</div></td><td><div class="c1">0.00</div></td><td><div class="c1 rd">10.00</div></td><td><div class="c">2022-03-30 11:15:58<br>2022-03-30 17:26:49</div></td><td><div class="c1">顶点免签支...</div></td><td><div class="c1">支付宝H...</div></td><td><div class="c">正常付款0次<br>47.75.119.177</div></td><td><div class="c1"><span class="bd bg">成功,已通知</span><span class="bu">补</span></div></td><td><div class="c1"><span class="ab af">封</span><span class="ab ad">订单详情</span><span class="ab ac">冻结订单</span></div></td></tr>
<tr><td><div class="c g">20220330111458504910<br>C20220330111457130988</div></td><td><div class="c">windows<br>正常订单</div></td><td><div class="c"><span class="lk">ceshi</span><br>10001</div></td><td><div class="c1 g">1.00</div></td><td><div class="c1">0.00</div></td><td><div class="c1 rd">1.00</div></td><td><div class="c">2022-03-30 11:14:58<br>未付</div></td><td><div class="c1">顶点免签支...</div></td><td><div class="c1">支付宝H...</div></td><td><div class="c">正常付款0次<br>47.75.119.177</div></td><td><div class="c1"><span class="bd bn">未付,未处理</span></div></td><td><div class="c1"><span class="ab af">封</span><span class="ab ad">订单详情</span><span class="ab ar">设置为已支付</span></div></td></tr>
<tr><td><div class="c g">20220330111120565549<br>C20220330111120715719</div></td><td><div class="c">windows<br>正常订单</div></td><td><div class="c"><span class="lk">ceshi</span><br>10001</div></td><td><div class="c1 g">11.00</div></td><td><div class="c1">0.00</div></td><td><div class="c1 rd">11.00</div></td><td><div class="c">2022-03-30 11:11:20<br>未付</div></td><td><div class="c1">顶点免签支...</div></td><td><div class="c1">支付宝H...</div></td><td><div class="c">正常付款0次<br>47.75.119.177</div></td><td><div class="c1"><span class="bd bn">未付,未处理</span></div></td><td><div class="c1"><span class="ab af">封</span><span class="ab ad">订单详情</span><span class="ab ar">设置为已支付</span></div></td></tr>
<tr><td><div class="c g">20220330111048569751<br>C20220330111048179689</div></td><td><div class="c">windows<br>正常订单</div></td><td><div class="c"><span class="lk">ceshi</span><br>10001</div></td><td><div class="c1 g">1.00</div></td><td><div class="c1">0.00</div></td><td><div class="c1 rd">1.00</div></td><td><div class="c">2022-03-30 11:10:48<br>未付</div></td><td><div class="c1">顶点免签支...</div></td><td><div class="c1">支付宝H...</div></td><td><div class="c">正常付款0次<br>47.75.119.177</div></td><td><div class="c1"><span class="bd bn">未付,未处理</span></div></td><td><div class="c1"><span class="ab af">封</span><span class="ab ad">订单详情</span><span class="ab ar">设置为已支付</span></div></td></tr>
<tr><td><div class="c g">20220330111030541014<br>C20220330111030791041</div></td><td><div class="c">windows<br>正常订单</div></td><td><div class="c"><span class="lk">ceshi</span><br>10001</div></td><td><div class="c1 g">1.00</div></td><td><div class="c1">0.00</div></td><td><div class="c1 rd">1.00</div></td><td><div class="c">2022-03-30 11:10:30<br>未付</div></td><td><div class="c1">顶点免签支...</div></td><td><div class="c1">支付宝H...</div></td><td><div class="c">正常付款0次<br>47.75.119.177</div></td><td><div class="c1"><span class="bd bn">未付,未处理</span></div></td><td><div class="c1"><span class="ab af">封</span><span class="ab ad">订单详情</span><span class="ab ar">设置为已支付</span></div></td></tr>
<tr><td><div class="c g">20220330110935102485<br>C20220330110934929349</div></td><td><div class="c">windows<br>正常订单</div></td><td><div class="c"><span class="lk">ceshi</span><br>10001</div></td><td><div class="c1 g">1.00</div></td><td><div class="c1">0.00</div></td><td><div class="c1 rd">1.00</div></td><td><div class="c">2022-03-30 11:09:35<br>未付</div></td><td><div class="c1">顶点免签支...</div></td><td><div class="c1">支付宝H...</div></td><td><div class="c">正常付款0次<br>47.75.119.177</div></td><td><div class="c1"><span class="bd bn">未付,未处理</span></div></td><td><div class="c1"><span class="ab af">封</span><span class="ab ad">订单详情</span><span class="ab ar">设置为已支付</span></div></td></tr>
<tr><td><div class="c g">20220330110856565155<br>C20220330110856876608</div></td><td><div class="c">windows<br>正常订单</div></td><td><div class="c"><span class="lk">ceshi</span><br>10001</div></td><td><div class="c1 g">10.00</div></td><td><div class="c1">0.00</div></td><td><div class="c1 rd">10.00</div></td><td><div class="c">2022-03-30 11:08:56<br>未付</div></td><td><div class="c1">顶点免签支...</div></td><td><div class="c1">支付宝H...</div></td><td><div class="c">正常付款0次<br>47.75.119.177</div></td><td><div class="c1"><span class="bd bn">未付,未处理</span></div></td><td><div class="c1"><span class="ab af">封</span><span class="ab ad">订单详情</span><span class="ab ar">设置为已支付</span></div></td></tr>
<tr><td><div class="c g">20220330110740994956<br>C20220330110739434197</div></td><td><div class="c">windows<br>正常订单</div></td><td><div class="c"><span class="lk">ceshi</span><br>10001</div></td><td><div class="c1 g">10.00</div></td><td><div class="c1">0.00</div></td><td><div class="c1 rd">10.00</div></td><td><div class="c">2022-03-30 11:07:40<br>未付</div></td><td><div class="c1">顶点免签支...</div></td><td><div class="c1">支付宝H...</div></td><td><div class="c">正常付款0次<br>47.75.119.177</div></td><td><div class="c1"><span class="bd bn">未付,未处理</span></div></td><td><div class="c1"><span class="ab af">封</span><span class="ab ad">订单详情</span><span class="ab ar">设置为已支付</span></div></td></tr>
<tr><td><div class="c g">20220330110557534910<br>C20220330110556474219</div></td><td><div class="c">windows<br>正常订单</div></td><td><div class="c"><span class="lk">ceshi</span><br>10001</div></td><td><div class="c1 g">10.00</div></td><td><div class="c1">0.00</div></td><td><div class="c1 rd">10.00</div></td><td><div class="c">2022-03-30 11:05:57<br>未付</div></td><td><div class="c1">顶点免签支...</div></td><td><div class="c1">支付宝H...</div></td><td><div class="c">正常付款0次<br>47.75.119.177</div></td><td><div class="c1"><span class="bd bn">未付,未处理</span></div></td><td><div class="c1"><span class="ab af">封</span><span class="ab ad">订单详情</span><span class="ab ar">设置为已支付</span></div></td></tr>
<tr><td><div class="c g">20220330110520485748<br>C20220330110520688676</div></td><td><div class="c">windows<br>正常订单</div></td><td><div class="c"><span class="lk">ceshi</span><br>10001</div></td><td><div class="c1 g">10.00</div></td><td><div class="c1">0.00</div></td><td><div class="c1 rd">10.00</div></td><td><div class="c">2022-03-30 11:05:20<br>未付</div></td><td><div class="c1">顶点免签支...</div></td><td><div class="c1">支付宝H...</div></td><td><div class="c">正常付款0次<br>47.75.119.177</div></td><td><div class="c1"><span class="bd bn">未付,未处理</span></div></td><td><div class="c1"><span class="ab af">封</span><span class="ab ad">订单详情</span><span class="ab ar">设置为已支付</span></div></td></tr>
<tr><td><div class="c g">20220330105611984951<br>C20220330105610451005</div></td><td><div class="c">windows<br>正常订单</div></td><td><div class="c"><span class="lk">ceshi</span><br>10001</div></td><td><div class="c1 g">1.00</div></td><td><div class="c1">0.00</div></td><td><div class="c1 rd">1.00</div></td><td><div class="c">2022-03-30 10:56:11<br>未付</div></td><td><div class="c1">顶点免签支...</div></td><td><div class="c1">支付宝H...</div></td><td><div class="c">正常付款0次<br>47.75.119.177</div></td><td><div class="c1"><span class="bd bn">未付,未处理</span></div></td><td><div class="c1"><span class="ab af">封</span><span class="ab ad">订单详情</span><span class="ab ar">设置为已支付</span></div></td></tr>
<tr><td><div class="c g">20220330105538974955<br>C20220330105537932437</div></td><td><div class="c">windows<br>正常订单</div></td><td><div class="c"><span class="lk">ceshi</span><br>10001</div></td><td><div class="c1 g">1.00</div></td><td><div class="c1">0.00</div></td><td><div class="c1 rd">1.00</div></td><td><div class="c">2022-03-30 10:55:3...<br>未付</div></td><td><div class="c1">顶点免签支...</div></td><td><div class="c1">支付宝H...</div></td><td><div class="c">正常付款0次<br>47.75.119.177</div></td><td><div class="c1"><span class="bd bn">未付,未处理</span></div></td><td><div class="c1"><span class="ab af">封</span><span class="ab ad">订单详情</span><span class="ab ar">设置为已支付</span></div></td></tr>
<tr><td><div class="c g">20220330105513491009<br>C20220330105513260781</div></td><td><div class="c">windows<br>正常订单</div></td><td><div class="c"><span class="lk">ceshi</span><br>10001</div></td><td><div class="c1 g">1.00</div></td><td><div class="c1">0.00</div></td><td><div class="c1 rd">1.00</div></td><td><div class="c">2022-03-30 10:55:13<br>未付</div></td><td><div class="c1">顶点免签支...</div></td><td><div class="c1">支付宝H...</div></td><td><div class="c">正常付款0次<br>47.75.119.177</div></td><td><div class="c1"><span class="bd bn">未付,未处理</span></div></td><td><div class="c1"><span class="ab af">封</span><span class="ab ad">订单详情</span><span class="ab ar">设置为已支付</span></div></td></tr>
<tr><td><div class="c g">20220330105015555099<br>C20220330105015746892</div></td><td><div class="c">windows<br>正常订单</div></td><td><div class="c"><span class="lk">ceshi</span><br>10001</div></td><td><div class="c1 g">10.00</div></td><td><div class="c1">0.00</div></td><td><div class="c1 rd">10.00</div></td><td><div class="c">2022-03-30 10:50:15<br>未付</div></td><td><div class="c1">顶点免签支...</div></td><td><div class="c1">支付宝H...</div></td><td><div class="c">正常付款0次<br>47.75.119.177</div></td><td><div class="c1"><span class="bd bn">未付,未处理</span></div></td><td><div class="c1"><span class="ab af">封</span><span class="ab ad">订单详情</span><span class="ab ar">设置为已支付</span></div></td></tr>
<tr><td><div class="c g">20220330104757100505<br>C20220330104757515315</div></td><td><div class="c">windows<br>正常订单</div></td><td><div class="c"><span class="lk">ceshi</span><br>10001</div></td><td><div class="c1 g">10.00</div></td><td><div class="c1">0.00</div></td><td><div class="c1 rd">10.00</div></td><td><div class="c">2022-03-30 10:47:57<br>未付</div></td><td><div class="c1">顶点免签支...</div></td><td><div class="c1">支付宝H...</div></td><td><div class="c">正常付款0次<br>47.75.119.177</div></td><td><div class="c1"><span class="bd bn">未付,未处理</span></div></td><td><div class="c1"><span class="ab af">封</span><span class="ab ad">订单详情</span><span class="ab ar">设置为已支付</span></div></td></tr>
<tr><td><div class="c g">20220330104434505157<br>C20220330104434953403</div></td><td><div class="c">windows<br>正常订单</div></td><td><div class="c"><span class="lk">ceshi</span><br>10001</div></td><td><div class="c1 g">10.00</div></td><td><div class="c1">0.00</div></td><td><div class="c1 rd">10.00</div></td><td><div class="c">2022-03-30 10:44:3...<br>未付</div></td><td><div class="c1">顶点免签支...</div></td><td><div class="c1">支付宝H...</div></td><td><div class="c">正常付款0次<br>47.75.119.177</div></td><td><div class="c1"><span class="bd bn">未付,未处理</span></div></td><td><div class="c1"><span class="ab af">封</span><span class="ab ad">订单详情</span><span class="ab ar">设置为已支付</span></div></td></tr>
<tr><td><div class="c g">20220330104345495152<br>C20220330104345690075</div></td><td><div class="c">windows<br>正常订单</div></td><td><div class="c"><span class="lk">ceshi</span><br>10001</div></td><td><div class="c1 g">100.00</div></td><td><div class="c1">0.00</div></td><td><div class="c1 rd">100.00</div></td><td><div class="c">2022-03-30 10:43:4...<br>未付</div></td><td><div class="c1">顶点免签支...</div></td><td><div class="c1">支付宝H...</div></td><td><div class="c">正常付款0次<br>47.75.119.177</div></td><td><div class="c1"><span class="bd bn">未付,未处理</span></div></td><td><div class="c1"><span class="ab af">封</span><span class="ab ad">订单详情</span><span class="ab ar">设置为已支付</span></div></td></tr>
<tr><td><div class="c g">20220330104225495410<br>C20220330104225517150</div></td><td><div class="c">windows<br>正常订单</div></td><td><div class="c"><span class="lk">ceshi</span><br>10001</div></td><td><div class="c1 g">10.00</div></td><td><div class="c1">0.00</div></td><td><div class="c1 rd">10.00</div></td><td><div class="c">2022-03-30 10:42:25<br>未付</div></td><td><div class="c1">顶点免签支...</div></td><td><div class="c1">支付宝H...</div></td><td><div class="c">正常付款0次<br>47.75.119.177</div></td><td><div class="c1"><span class="bd bn">未付,未处理</span></div></td><td><div class="c1"><span class="ab af">封</span><span class="ab ad">订单详情</span><span class="ab ar">设置为已支付</span></div></td></tr>
<tr><td><div class="c g">20220330104121499951<br>C20220330104121227471</div></td><td><div class="c">windows<br>正常订单</div></td><td><div class="c"><span class="lk">ceshi</span><br>10001</div></td><td><div class="c1 g">100.00</div></td><td><div class="c1">0.00</div></td><td><div class="c1 rd">100.00</div></td><td><div class="c">2022-03-30 10:41:21<br>未付</div></td><td><div class="c1">顶点免签支...</div></td><td><div class="c1">支付宝H...</div></td><td><div class="c">正常付款0次<br>47.75.119.177</div></td><td><div class="c1"><span class="bd bn">未付,未处理</span></div></td><td><div class="c1"><span class="ab af">封</span><span class="ab ad">订单详情</span><span class="ab ar">设置为已支付</span></div></td></tr>
<tr><td><div class="c g">20220330103917535757<br>C20220330103917501089</div></td><td><div class="c">windows<br>正常订单</div></td><td><div class="c"><span class="lk">ceshi</span><br>10001</div></td><td><div class="c1 g">10.00</div></td><td><div class="c1">0.00</div></td><td><div class="c1 rd">10.00</div></td><td><div class="c">2022-03-30 10:39:17<br>未付</div></td><td><div class="c1">顶点免签支...</div></td><td><div class="c1">支付宝H...</div></td><td><div class="c">正常付款0次<br>47.57.189.17</div></td><td><div class="c1"><span class="bd bn">未付,未处理</span></div></td><td><div class="c1"><span class="ab af">封</span><span class="ab ad">订单详情</span><span class="ab ar">设置为已支付</span></div></td></tr>
<tr><td><div class="c g">20220330103819984853<br>C20220330103818639476</div></td><td><div class="c">windows<br>正常订单</div></td><td><div class="c"><span class="lk">ceshi</span><br>10001</div></td><td><div class="c1 g">10.00</div></td><td><div class="c1">0.00</div></td><td><div class="c1 rd">10.00</div></td><td><div class="c">2022-03-30 10:38:19<br>未付</div></td><td><div class="c1">顶点免签支...</div></td><td><div class="c1">支付宝H...</div></td><td><div class="c">正常付款0次<br>47.57.189.17</div></td><td><div class="c1"><span class="bd bn">未付,未处理</span></div></td><td><div class="c1"><span class="ab af">封</span><span class="ab ad">订单详情</span><span class="ab ar">设置为已支付</span></div></td></tr>
<tr><td><div class="c g">20220330103707519754<br>C20220330103707487510</div></td><td><div class="c">windows<br>正常订单</div></td><td><div class="c"><span class="lk">ceshi</span><br>10001</div></td><td><div class="c1 g">100.00</div></td><td><div class="c1">0.00</div></td><td><div class="c1 rd">100.00</div></td><td><div class="c">2022-03-30 10:37:07<br>未付</div></td><td><div class="c1">顶点免签支...</div></td><td><div class="c1">支付宝H...</div></td><td><div class="c">正常付款0次<br>47.57.189.17</div></td><td><div class="c1"><span class="bd bn">未付,未处理</span></div></td><td><div class="c1"><span class="ab af">封</span><span class="ab ad">订单详情</span><span class="ab ar">设置为已支付</span></div></td></tr>
<tr><td><div class="c g">20220330103642975610<br>C20220330103642564724</div></td><td><div class="c">windows<br>正常订单</div></td><td><div class="c"><span class="lk">ceshi</span><br>10001</div></td><td><div class="c1 g">100.00</div></td><td><div class="c1">0.00</div></td><td><div class="c1 rd">100.00</div></td><td><div class="c">2022-03-30 10:36:42<br>未付</div></td><td><div class="c1">顶点免签支...</div></td><td><div class="c1">支付宝H...</div></td><td><div class="c">正常付款0次<br>47.57.189.17</div></td><td><div class="c1"><span class="bd bn">未付,未处理</span></div></td><td><div class="c1"><span class="ab af">封</span><span class="ab ad">订单详情</span><span class="ab ar">设置为已支付</span></div></td></tr>
</tbody></table>
<div id="sbar">
 <div class="abs" style="left:6px;top:5px;width:0;height:0;border-top:4px solid transparent;border-bottom:4px solid transparent;border-right:4px solid #a3a3a3"></div>
 <div class="abs" style="left:17px;top:2px;width:1443px;height:13px;background:#c1c1c1"></div>
 <div class="abs" style="left:1565px;top:5px;width:0;height:0;border-top:4px solid transparent;border-bottom:4px solid transparent;border-left:4px solid #505050"></div>
</div>
</div>
<div id="pg">
 <div class="pgi" style="left:0;width:36px;background:#009688;border-color:#009688;color:#fff">1</div>
 <div class="pgi" style="left:36px;width:37px;border-left:none">2</div>
 <div class="pgi" style="left:72px;width:68px">下一页</div>
 <div class="pgi" style="left:144px;top:2px;width:76px;height:28px;border:1px solid #767676;border-radius:2px;text-align:left;padding-left:5px;line-height:26px;color:#000;font-size:14px">30条<span style="position:absolute;right:6px;top:0;font-size:10px">&#9660;</span></div>
</div>
<div id="foot">
 <span class="abs" style="left:15px;top:16px;white-space:nowrap">&copy; 2018-2019 聚合支付 版权所有</span>
 <span class="abs" style="left:1356px;top:16px;white-space:nowrap">平台首页</span>
 <span class="abs" style="left:1425px;top:23px;width:3px;height:3px;border-radius:50%;background:#b0b8c0"></span>
 <span class="abs" style="left:1454px;top:16px;white-space:nowrap">大数据商业开源版 系统版本:6.04</span>
</div>
</body></html>
